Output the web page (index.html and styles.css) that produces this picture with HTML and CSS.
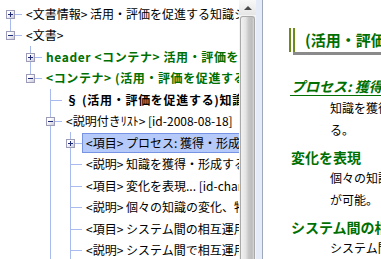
FILE: index.html
```html
<!DOCTYPE html>
<html lang="ja">
<head>
  <meta charset="UTF-8">
  <title>文書ツリー</title>
  <link rel="stylesheet" href="styles.css">
</head>
<body>
  <div class="window">
    <!-- Tree pane -->
    <div class="tree-pane">
      <div class="tree">
        <div class="row">
          <span class="joint first"><span class="exp plus"></span></span>
          <span class="label">&lt;文書情報&gt; 活用・評価を促進する知識システム</span>
        </div>
        <div class="row">
          <span class="joint last"><span class="exp minus"></span></span>
          <span class="label">&lt;文書&gt;</span>
        </div>
        <div class="row">
          <span class="cell"></span>
          <span class="joint mid"><span class="exp plus"></span></span>
          <span class="label green">header &lt;コンテナ&gt; 活用・評価を促進する</span>
        </div>
        <div class="row">
          <span class="cell"></span>
          <span class="joint last"><span class="exp minus"></span></span>
          <span class="label green">&lt;コンテナ&gt; (活用・評価を促進する)知識</span>
        </div>
        <div class="row">
          <span class="cell"></span><span class="cell"></span>
          <span class="joint mid leaf"></span>
          <span class="label bold">§ (活用・評価を促進する)知識システム</span>
        </div>
        <div class="row">
          <span class="cell"></span><span class="cell"></span>
          <span class="joint mid"><span class="exp minus"></span></span>
          <span class="label">&lt;説明付きﾘｽﾄ&gt; [id-2008-08-18]</span>
        </div>
        <div class="row">
          <span class="cell"></span><span class="cell"></span><span class="cell line"></span>
          <span class="joint mid"><span class="exp plus"></span></span>
          <span class="label selected">&lt;項目&gt; プロセス: 獲得・形成</span>
        </div>
        <div class="row">
          <span class="cell"></span><span class="cell"></span><span class="cell line"></span>
          <span class="joint mid leaf"></span>
          <span class="label">&lt;説明&gt; 知識を獲得・形成する</span>
        </div>
        <div class="row">
          <span class="cell"></span><span class="cell"></span><span class="cell line"></span>
          <span class="joint mid leaf"></span>
          <span class="label">&lt;項目&gt; 変化を表現... [id-change]</span>
        </div>
        <div class="row">
          <span class="cell"></span><span class="cell"></span><span class="cell line"></span>
          <span class="joint mid leaf"></span>
          <span class="label">&lt;説明&gt; 個々の知識の変化、特徴</span>
        </div>
        <div class="row">
          <span class="cell"></span><span class="cell"></span><span class="cell line"></span>
          <span class="joint mid leaf"></span>
          <span class="label">&lt;項目&gt; システム間の相互運用</span>
        </div>
        <div class="row">
          <span class="cell"></span><span class="cell"></span><span class="cell line"></span>
          <span class="joint mid leaf"></span>
          <span class="label">&lt;説明&gt; システム間で相互運用</span>
        </div>
      </div>

      <div class="scrollbar">
        <div class="scroll-btn"><span class="arrow-up"></span></div>
        <div class="scroll-thumb"></div>
      </div>
    </div>

    <div class="splitter"></div>

    <!-- Document preview -->
    <div class="preview">
      <div class="doc">
        <h1 class="doc-title">(活用・評価を促進する)知識システム</h1>

        <h2 class="doc-item current">プロセス: 獲得・形成</h2>
        <p class="doc-desc">知識を獲得・形成する。</p>

        <h2 class="doc-item">変化を表現</h2>
        <p class="doc-desc">個々の知識の版管理が可能。</p>

        <h2 class="doc-item">システム間の相互運用</h2>
        <p class="doc-desc">システム間で相互運用する。</p>
      </div>
    </div>
  </div>
</body>
</html>
```

FILE: styles.css
```css
/* General Layout */
body {
  margin: 0;
  padding: 0;
  background: #ffffff;
  font-family: "Noto Sans CJK JP", "Noto Sans", sans-serif;
  font-size: 12px;
  color: #000000;
}

.window {
  display: flex;
  height: 259px;
  overflow: hidden;
}

/* Tree Pane */
.tree-pane {
  display: flex;
  width: 256px;
  flex-shrink: 0;
}

.tree {
  width: 239px;
  padding-top: 3px;
  overflow: hidden;
}

.row {
  display: flex;
  align-items: center;
  height: 21.5px;
  white-space: nowrap;
}

.cell,
.joint {
  position: relative;
  width: 20px;
  height: 100%;
  flex-shrink: 0;
}

/* tree guide lines */
.cell.line::before,
.joint::before {
  content: "";
  position: absolute;
  left: 10px;
  width: 1px;
  background: #a9bbee;
}

.cell.line::before,
.joint.mid::before {
  top: 0;
  bottom: 0;
}

.joint.first::before {
  top: 50%;
  bottom: 0;
}

.joint.last::before {
  top: 0;
  bottom: 50%;
}

.joint::after {
  content: "";
  position: absolute;
  top: 50%;
  left: 10px;
  width: 12px;
  height: 1px;
  background: #a9bbee;
}

/* expander boxes */
.exp {
  position: absolute;
  z-index: 1;
  top: 50%;
  left: 6px;
  width: 7px;
  height: 7px;
  margin-top: -4px;
  border: 1px solid #9c9cb8;
  background: linear-gradient(135deg, #ffffff 30%, #c9c9dc);
}

.exp::before {
  content: "";
  position: absolute;
  top: 3px;
  left: 1px;
  width: 5px;
  height: 1px;
  background: #1f2a78;
}

.exp.plus::after {
  content: "";
  position: absolute;
  top: 1px;
  left: 3px;
  width: 1px;
  height: 5px;
  background: #1f2a78;
}

.label {
  margin-left: 2px;
  padding: 0 3px;
  height: 18px;
  line-height: 18px;
  border: 1px solid transparent;
}

.label.green {
  color: #006f00;
  font-weight: bold;
  letter-spacing: 0.6px;
}

.label.bold {
  font-weight: bold;
  letter-spacing: 0.7px;
}

.label.selected {
  background: #b5caf8;
  border-color: #7693e4;
}

/* Scrollbar */
.scrollbar {
  display: flex;
  flex-direction: column;
  width: 17px;
  background: #f4f4f4;
}

.scroll-btn {
  display: flex;
  align-items: center;
  justify-content: center;
  height: 15px;
  background: linear-gradient(#f8f8f8, #e6e6e6);
}

.arrow-up {
  width: 0;
  height: 0;
  border-left: 4px solid transparent;
  border-right: 4px solid transparent;
  border-bottom: 4px solid #4a4a4a;
}

.scroll-thumb {
  flex: 1;
  margin: 1px 1px 0 1px;
  border: 1px solid #a9a9a9;
  border-bottom: none;
  border-radius: 3px 3px 0 0;
  background: linear-gradient(90deg, #f2f2f2 0%, #e4e4e4 35%, #c6c6c6 60%, #bdbdbd 85%, #d8d8d8 100%);
}

.splitter {
  width: 6px;
  flex-shrink: 0;
  background: #e6ebf9;
  border-right: 1px solid #9ea8bc;
}

/* Document Preview */
.preview {
  flex: 1;
  overflow: hidden;
}

.doc {
  width: 200px;
}

.doc-title {
  margin: 28px 0 0 26px;
  padding-left: 10px;
  height: 24px;
  line-height: 24px;
  border-left: 6px double #6d8a1f;
  background: #ffffff;
  box-shadow: 4px 3px 0 #8a8a8a;
  color: #006f00;
  font-size: 15px;
  font-weight: bold;
  white-space: nowrap;
}

.doc-item {
  margin: 7px 0 0 27px;
  padding-left: 1px;
  line-height: 18px;
  color: #006f00;
  font-size: 14px;
  font-weight: bold;
  white-space: nowrap;
}

.doc-item.current {
  margin-top: 25px;
  font-style: italic;
  border-bottom: 1px solid #006f00;
}

.doc-desc {
  margin: 1px 0 0 67px;
  width: 108px;
  line-height: 22px;
}
```
